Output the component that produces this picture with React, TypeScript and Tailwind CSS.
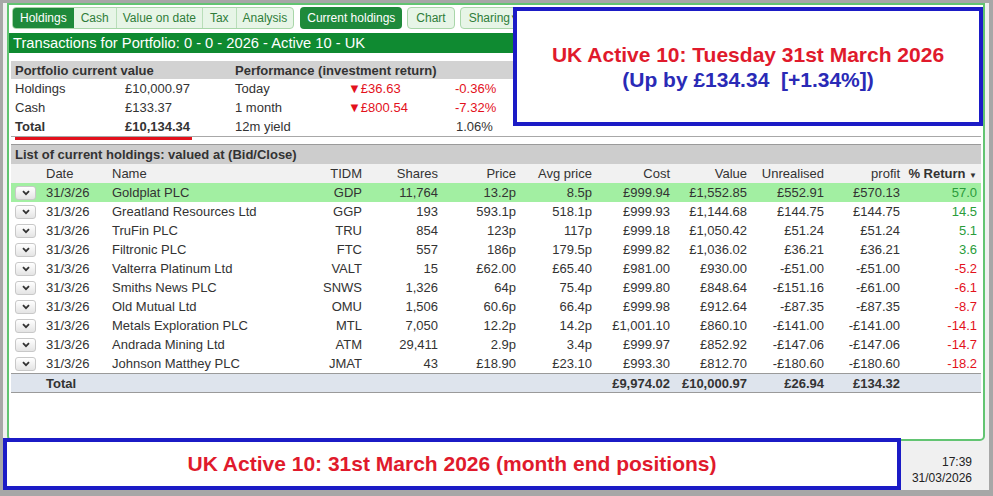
import React from 'react'

type Holding = {
  name: string
  tidm: string
  shares: string
  price: string
  avg: string
  cost: string
  value: string
  unrealised: string
  profit: string
  ret: string
}

const holdings: Holding[] = [
  { name: 'Goldplat PLC', tidm: 'GDP', shares: '11,764', price: '13.2p', avg: '8.5p', cost: '£999.94', value: '£1,552.85', unrealised: '£552.91', profit: '£570.13', ret: '57.0' },
  { name: 'Greatland Resources Ltd', tidm: 'GGP', shares: '193', price: '593.1p', avg: '518.1p', cost: '£999.93', value: '£1,144.68', unrealised: '£144.75', profit: '£144.75', ret: '14.5' },
  { name: 'TruFin PLC', tidm: 'TRU', shares: '854', price: '123p', avg: '117p', cost: '£999.18', value: '£1,050.42', unrealised: '£51.24', profit: '£51.24', ret: '5.1' },
  { name: 'Filtronic PLC', tidm: 'FTC', shares: '557', price: '186p', avg: '179.5p', cost: '£999.82', value: '£1,036.02', unrealised: '£36.21', profit: '£36.21', ret: '3.6' },
  { name: 'Valterra Platinum Ltd', tidm: 'VALT', shares: '15', price: '£62.00', avg: '£65.40', cost: '£981.00', value: '£930.00', unrealised: '-£51.00', profit: '-£51.00', ret: '-5.2' },
  { name: 'Smiths News PLC', tidm: 'SNWS', shares: '1,326', price: '64p', avg: '75.4p', cost: '£999.80', value: '£848.64', unrealised: '-£151.16', profit: '-£61.00', ret: '-6.1' },
  { name: 'Old Mutual Ltd', tidm: 'OMU', shares: '1,506', price: '60.6p', avg: '66.4p', cost: '£999.98', value: '£912.64', unrealised: '-£87.35', profit: '-£87.35', ret: '-8.7' },
  { name: 'Metals Exploration PLC', tidm: 'MTL', shares: '7,050', price: '12.2p', avg: '14.2p', cost: '£1,001.10', value: '£860.10', unrealised: '-£141.00', profit: '-£141.00', ret: '-14.1' },
  { name: 'Andrada Mining Ltd', tidm: 'ATM', shares: '29,411', price: '2.9p', avg: '3.4p', cost: '£999.97', value: '£852.92', unrealised: '-£147.06', profit: '-£147.06', ret: '-14.7' },
  { name: 'Johnson Matthey PLC', tidm: 'JMAT', shares: '43', price: '£18.90', avg: '£23.10', cost: '£993.30', value: '£812.70', unrealised: '-£180.60', profit: '-£180.60', ret: '-18.2' },
]

const cols = 'grid grid-cols-[35px_66px_188px_62px_76px_78px_76px_78px_77px_77px_76px_77px]'

function RowButton() {
  return (
    <div className="ml-[4px] flex h-[14px] w-[21px] items-center justify-center rounded-[3px] border border-[#c8c8c8] bg-gradient-to-b from-white to-[#e4e4e4]">
      <svg width="8" height="6" viewBox="0 0 8 6">
        <path d="M1 1.2 L4 4.2 L7 1.2" fill="none" stroke="#333" strokeWidth="1.8" />
      </svg>
    </div>
  )
}

export default function App() {
  return (
    <div className="relative h-[496px] w-[993px] overflow-hidden bg-[#a7a7a7] pb-[6px] pl-[3px] pr-[4px] pt-[3px] font-['Liberation_Sans',Arial,sans-serif] text-[13px] text-[#333]">
      <div className="flex h-full flex-col bg-[#f0f0f0] pl-[4px]">
        {/* main window */}
        <div className="h-[438px] w-[978px] rounded-b-[5px] border-2 border-[#62c472] bg-white">
          {/* tabs */}
          <div className="flex items-center pl-[3px] pt-[2px] text-[12px] leading-none">
            <div className="flex h-[22px] overflow-hidden rounded-[4px] border border-[#a9d6a9] bg-[#e7f5e7] text-[#2f7d3a]">
              <div className="flex items-center bg-[#1f8a3b] px-[7px] text-white">Holdings</div>
              <div className="flex items-center border-r border-[#b9deb9] px-[7px]">Cash</div>
              <div className="flex items-center border-r border-[#b9deb9] px-[6px]">Value on date</div>
              <div className="flex items-center border-r border-[#b9deb9] px-[7px]">Tax</div>
              <div className="flex items-center px-[6px]">Analysis</div>
            </div>
            <div className="ml-[6px] flex h-[22px] items-center rounded-[4px] bg-[#1f8a3b] px-[7px] text-white">Current holdings</div>
            <div className="ml-[5px] flex h-[22px] items-center rounded-[4px] border border-[#a9d6a9] bg-[#e7f5e7] px-[8px] text-[#2f7d3a]">Chart</div>
            <div className="ml-[5px] flex h-[22px] items-center rounded-[4px] border border-[#a9d6a9] bg-[#e7f5e7] px-[8px] text-[#2f7d3a]">
              Sharing<span className="text-[8px]">▼</span>
            </div>
          </div>

          {/* title bar */}
          <div className="mt-[4px] flex h-[20px] items-center bg-[#0f8a31] pl-[4px] text-[14.7px] text-white">
            Transactions for Portfolio: 0 - 0 - 2026 - Active 10 - UK
          </div>

          {/* summary */}
          <div className="mx-[2px] mt-[8px]">
            <div className="grid h-[18px] grid-cols-[110px_110px_113px_107px_1fr] items-center bg-[#d2d2d2] pl-[4px] font-bold">
              <div className="col-span-2">Portfolio current value</div>
              <div className="col-span-3">Performance (investment return)</div>
            </div>
            <div className="border-b border-[#a8a8a8]">
              <div className="grid h-[19px] grid-cols-[110px_110px_113px_107px_1fr] items-center pl-[4px]">
                <div>Holdings</div>
                <div>£10,000.97</div>
                <div>Today</div>
                <div className="text-[#e3111c]">▼£36.63</div>
                <div className="text-[#e3111c]">-0.36%</div>
              </div>
              <div className="grid h-[19px] grid-cols-[110px_110px_113px_107px_1fr] items-center pl-[4px]">
                <div>Cash</div>
                <div>£133.37</div>
                <div>1 month</div>
                <div className="text-[#e3111c]">▼£800.54</div>
                <div className="text-[#e3111c]">-7.32%</div>
              </div>
              <div className="grid h-[19px] grid-cols-[110px_110px_113px_107px_1fr] items-center pl-[4px]">
                <div className="font-bold">Total</div>
                <div className="font-bold">£10,134.34</div>
                <div>12m yield</div>
                <div />
                <div className="pl-[1px]">1.06%</div>
              </div>
            </div>
            <div className="ml-[4px] h-[3px] w-[177px] bg-[#e3111c]" />
          </div>

          {/* holdings list */}
          <div className="mx-[2px] mt-[4px]">
            <div className="flex h-[20px] items-center border-t border-[#9a9a9a] bg-[#cdcdcd] pl-[4px] font-bold">
              List of current holdings: valued at (Bid/Close)
            </div>
            <div className={`${cols} h-[19px] items-center bg-[#f1f1f1]`}>
              <div />
              <div>Date</div>
              <div>Name</div>
              <div className="text-right">TIDM</div>
              <div className="text-right">Shares</div>
              <div className="text-right">Price</div>
              <div className="text-right">Avg price</div>
              <div className="text-right">Cost</div>
              <div className="text-right">Value</div>
              <div className="text-right">Unrealised</div>
              <div className="text-right">profit</div>
              <div className="text-right font-bold">
                % Return <span className="text-[8px] font-normal">▼</span>
              </div>
            </div>
            {holdings.map((h, i) => (
              <div key={h.tidm} className={`${cols} h-[19px] items-center ${i === 0 ? 'bg-[#a2efa2]' : ''}`}>
                <RowButton />
                <div>31/3/26</div>
                <div>{h.name}</div>
                <div className="text-right">{h.tidm}</div>
                <div className="text-right">{h.shares}</div>
                <div className="text-right">{h.price}</div>
                <div className="text-right">{h.avg}</div>
                <div className="text-right">{h.cost}</div>
                <div className="text-right">{h.value}</div>
                <div className="text-right">{h.unrealised}</div>
                <div className="text-right">{h.profit}</div>
                <div className={`text-right ${h.ret.startsWith('-') ? 'text-[#e3111c]' : 'text-[#2a9c3a]'}`}>{h.ret}</div>
              </div>
            ))}
            <div className={`${cols} h-[20px] items-center border-y border-[#9a9a9a] bg-[#dee4ed] font-bold`}>
              <div />
              <div>Total</div>
              <div />
              <div />
              <div />
              <div />
              <div />
              <div className="text-right">£9,974.02</div>
              <div className="text-right">£10,000.97</div>
              <div className="text-right">£26.94</div>
              <div className="text-right">£134.32</div>
              <div />
            </div>
          </div>
        </div>

        {/* clock */}
        <div className="flex flex-1 flex-col items-end justify-center pr-[17px] pt-[9px] text-[12px] leading-[16px] text-[#222]">
          <div>17:39</div>
          <div>31/03/2026</div>
        </div>
      </div>

      {/* overlay captions */}
      <div className="absolute left-[513px] top-[7px] flex h-[119px] w-[470px] flex-col items-center justify-center border-4 border-[#1b1bc6] bg-white text-[21px] font-bold leading-[25px]">
        <div className="text-[#e01a2c]">UK Active 10: Tuesday 31st March 2026</div>
        <div className="whitespace-pre text-[#2a2ab6]">(Up by £134.34  [+1.34%])</div>
      </div>
      <div className="absolute left-[3px] top-[438px] flex h-[52px] w-[898px] items-center justify-center border-4 border-[#1b1bc6] bg-white text-[21px] font-bold text-[#e01a2c]">
        UK Active 10: 31st March 2026 (month end positions)
      </div>
    </div>
  )
}
